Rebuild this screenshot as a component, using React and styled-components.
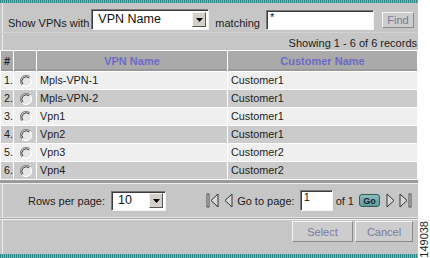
import React from 'react'
import styled, { createGlobalStyle } from 'styled-components'

const GlobalStyle = createGlobalStyle`
  html, body { margin: 0; padding: 0; background: #fff; }
  body {
    font-family: "Liberation Sans", Arial, sans-serif;
    color: #1c1c1c;
  }
  * { box-sizing: border-box; }
`

const vpns = [
  { name: 'Mpls-VPN-1', customer: 'Customer1' },
  { name: 'Mpls-VPN-2', customer: 'Customer1' },
  { name: 'Vpn1', customer: 'Customer1' },
  { name: 'Vpn2', customer: 'Customer1' },
  { name: 'Vpn3', customer: 'Customer2' },
  { name: 'Vpn4', customer: 'Customer2' },
]

export default function App() {
  return (
    <Page>
      <GlobalStyle />
      <Panel>
        <Stripe $h={3} />
        <FilterBar>
          <Label>Show VPNs with</Label>
          <Dropdown $w={118} $h={21}>
            <DropValue>VPN Name</DropValue>
            <DropArrow><ArrowDown /></DropArrow>
          </Dropdown>
          <Label $gap={6}>matching</Label>
          <TextBox $w={108} $h={20} $gap={4}>*</TextBox>
          <FlatButton $w={32} $h={16} $gap={8} $lift={2}>Find</FlatButton>
        </FilterBar>
        <RecordCount>Showing 1 - 6 of 6 records</RecordCount>
        <Grid>
          <colgroup>
            <col style={{ width: 12 }} />
            <col style={{ width: 22 }} />
            <col style={{ width: 190 }} />
            <col style={{ width: 189 }} />
          </colgroup>
          <thead>
            <tr>
              <HeadCell $plain>#</HeadCell>
              <HeadCell />
              <HeadCell>VPN Name</HeadCell>
              <HeadCell>Customer Name</HeadCell>
            </tr>
          </thead>
          <tbody>
            {vpns.map((v, i) => (
              <Row key={v.name} $shade={i % 2 === 1}>
                <Cell>{i + 1}.</Cell>
                <RadioCell><RadioMark /></RadioCell>
                <Cell>{v.name}</Cell>
                <Cell>{v.customer}</Cell>
              </Row>
            ))}
          </tbody>
        </Grid>
        <DoubleRule />
        <Pager>
          <Label>Rows per page:</Label>
          <Dropdown $w={55} $h={20} $gap={4}>
            <DropValue>10</DropValue>
            <DropArrow><ArrowDown /></DropArrow>
          </Dropdown>
          <Nav>
            <NavIcon kind="first" />
            <NavIcon kind="prev" />
            <Label $gap={3}>Go to page:</Label>
            <TextBox $w={33} $h={21} $gap={3}>1</TextBox>
            <Label $gap={3}>of 1</Label>
            <GoButton>Go</GoButton>
            <NavIcon kind="next" />
            <NavIcon kind="last" />
          </Nav>
        </Pager>
        <Separator />
        <Footer>
          <FlatButton $w={61} $h={21}>Select</FlatButton>
          <FlatButton $w={58} $h={21} $gap={2}>Cancel</FlatButton>
        </Footer>
        <Stripe $h={4} />
      </Panel>
      <Side>
        <FigureNo>149038</FigureNo>
      </Side>
    </Page>
  )
}

function ArrowDown() {
  return (
    <svg width="7" height="4" viewBox="0 0 7 4">
      <polygon points="0,0 7,0 3.5,4" fill="#000" />
    </svg>
  )
}

function RadioMark() {
  return (
    <svg width="12" height="12" viewBox="0 0 12 12" style={{ verticalAlign: 'middle', marginLeft: 2 }}>
      <circle cx="6" cy="6" r="5" fill="#e6e6e6" />
      <path d="M9.9 2.1 A5.5 5.5 0 0 0 2.1 9.9" fill="none" stroke="#8a8a8a" strokeWidth="1.2" />
      <path d="M9.1 2.9 A4.4 4.4 0 0 0 2.9 9.1" fill="none" stroke="#444" strokeWidth="1" />
      <path d="M2.1 9.9 A5.5 5.5 0 0 0 9.9 2.1" fill="none" stroke="#ffffff" strokeWidth="1.2" />
    </svg>
  )
}

function NavIcon({ kind }) {
  const shapes = {
    first: (
      <>
        <rect x="1" y="1" width="2" height="13" fill="#d8d8d8" stroke="#333" strokeWidth="0.8" />
        <polygon points="12,1 5,7.5 12,14" fill="#d8d8d8" stroke="#333" strokeWidth="1" />
      </>
    ),
    prev: <polygon points="10,1 3,7.5 10,14" fill="#d8d8d8" stroke="#333" strokeWidth="1" />,
    next: <polygon points="2,1 9,7.5 2,14" fill="#d8d8d8" stroke="#333" strokeWidth="1" />,
    last: (
      <>
        <polygon points="1,1 8,7.5 1,14" fill="#d8d8d8" stroke="#333" strokeWidth="1" />
        <rect x="10" y="1" width="2" height="13" fill="#d8d8d8" stroke="#333" strokeWidth="0.8" />
      </>
    ),
  }
  const w = kind === 'first' || kind === 'last' ? 14 : 12
  return (
    <IconBox>
      <svg width={w} height="15" viewBox={`0 0 ${w} 15`}>{shapes[kind]}</svg>
    </IconBox>
  )
}

const Page = styled.div`
  display: flex;
  width: 430px;
  height: 258px;
  background: #fff;
`

const Panel = styled.div`
  width: 418px;
  height: 258px;
  display: flex;
  flex-direction: column;
  background: linear-gradient(to right, #c6c6c6 2px, #ececec 2px, #ececec 3px, #c6c6c6 3px);
  font-size: 11px;
`

const Stripe = styled.div`
  height: ${p => p.$h}px;
  flex: none;
  background: repeating-linear-gradient(90deg, #2b8585 0 1px, #7db8b8 1px 2px);
`

const FilterBar = styled.div`
  height: 29px;
  flex: none;
  display: flex;
  align-items: flex-end;
  padding: 0 0 2px 8px;
`

const Label = styled.span`
  margin-left: ${p => p.$gap || 0}px;
  margin-right: 2px;
  font-size: 11px;
  line-height: 14px;
  white-space: nowrap;
`

const Dropdown = styled.div`
  width: ${p => p.$w}px;
  height: ${p => p.$h}px;
  margin-left: ${p => p.$gap || 0}px;
  display: flex;
  align-items: center;
  background: #fff;
  border: 1px solid;
  border-color: #7a7a7a #f4f4f4 #f4f4f4 #7a7a7a;
  box-shadow: inset 1px 1px 0 #3c3c3c;
`

const DropValue = styled.span`
  flex: 1;
  padding-left: 6px;
  font-size: 12.5px;
  line-height: 15px;
  color: #111;
`

const DropArrow = styled.span`
  width: 14px;
  height: 15px;
  margin-right: 2px;
  display: flex;
  align-items: center;
  justify-content: center;
  background: #d4d0c8;
  border: 1px solid;
  border-color: #f4f4f4 #555 #555 #f4f4f4;
`

const TextBox = styled.div`
  width: ${p => p.$w}px;
  height: ${p => p.$h}px;
  margin-left: ${p => p.$gap || 0}px;
  padding: 1px 3px;
  background: #fff;
  border: 1px solid;
  border-color: #7a7a7a #f4f4f4 #f4f4f4 #7a7a7a;
  box-shadow: inset 1px 1px 0 #3c3c3c;
  font-size: 11px;
  line-height: 11px;
  color: #111;
`

const FlatButton = styled.div`
  width: ${p => p.$w}px;
  height: ${p => p.$h}px;
  margin-left: ${p => p.$gap || 0}px;
  margin-bottom: ${p => p.$lift || 0}px;
  display: flex;
  align-items: center;
  justify-content: center;
  background: #cdcdcd;
  border: 1px solid;
  border-color: #f6f6f6 #8a8a8a #8a8a8a #f6f6f6;
  color: #7a7a9c;
  font-size: 11px;
`

const RecordCount = styled.div`
  height: 18px;
  flex: none;
  display: flex;
  justify-content: flex-end;
  align-items: center;
  padding: 2px 1px 0 0;
  font-size: 11px;
  border-top: 1px solid #d2d2d2;
`

const Grid = styled.table`
  width: 418px;
  flex: none;
  table-layout: fixed;
  border-collapse: separate;
  border-spacing: 1px;
  background: #fff;
  font-size: 10.8px;
`

const HeadCell = styled.th`
  height: 20px;
  padding: 0 0 0 ${p => (p.$plain ? 3 : 0)}px;
  background: #aaaaaa;
  box-shadow: inset 0 -2px 0 #9a9a9a;
  color: ${p => (p.$plain ? '#222' : '#6a6ac6')};
  text-align: ${p => (p.$plain ? 'left' : 'center')};
  font-weight: bold;
  font-size: 11px;
`

const Row = styled.tr`
  background: ${p => (p.$shade ? '#cbcbcb' : '#efefef')};
`

const Cell = styled.td`
  height: 17px;
  padding: 0 0 0 3px;
  line-height: 17px;
  white-space: nowrap;
`

const RadioCell = styled.td`
  height: 17px;
  padding: 0;
  text-align: center;
  line-height: 0;
`

const DoubleRule = styled.div`
  height: 4px;
  flex: none;
  background: #9a9a9a;
  border-bottom: 1px solid #ececec;
`

const Pager = styled.div`
  height: 33px;
  flex: none;
  display: flex;
  align-items: center;
  padding: 0 5px 0 28px;
`

const Nav = styled.div`
  margin-left: auto;
  display: flex;
  align-items: center;
`

const IconBox = styled.span`
  display: flex;
  margin-left: 2px;
`

const GoButton = styled.span`
  width: 21px;
  height: 13px;
  margin: 0 3px 0 3px;
  display: flex;
  align-items: center;
  justify-content: center;
  background: linear-gradient(#8cbcbc, #5f9898);
  border: 1px solid #2f5e5e;
  border-radius: 3px;
  color: #123;
  font-size: 9px;
  font-weight: bold;
`

const Separator = styled.div`
  height: 3px;
  flex: none;
  border-top: 1px solid #e6e6e6;
  border-bottom: 1px solid #f4f4f4;
  background: #a4a4a4;
`

const Footer = styled.div`
  height: 34px;
  flex: none;
  display: flex;
  justify-content: flex-end;
  align-items: flex-start;
  padding: 1px 5px 0 0;
`

const Side = styled.div`
  width: 12px;
  display: flex;
  align-items: flex-end;
  justify-content: center;
`

const FigureNo = styled.span`
  writing-mode: vertical-rl;
  transform: rotate(180deg);
  font-size: 11px;
  line-height: 11px;
  color: #222;
`
